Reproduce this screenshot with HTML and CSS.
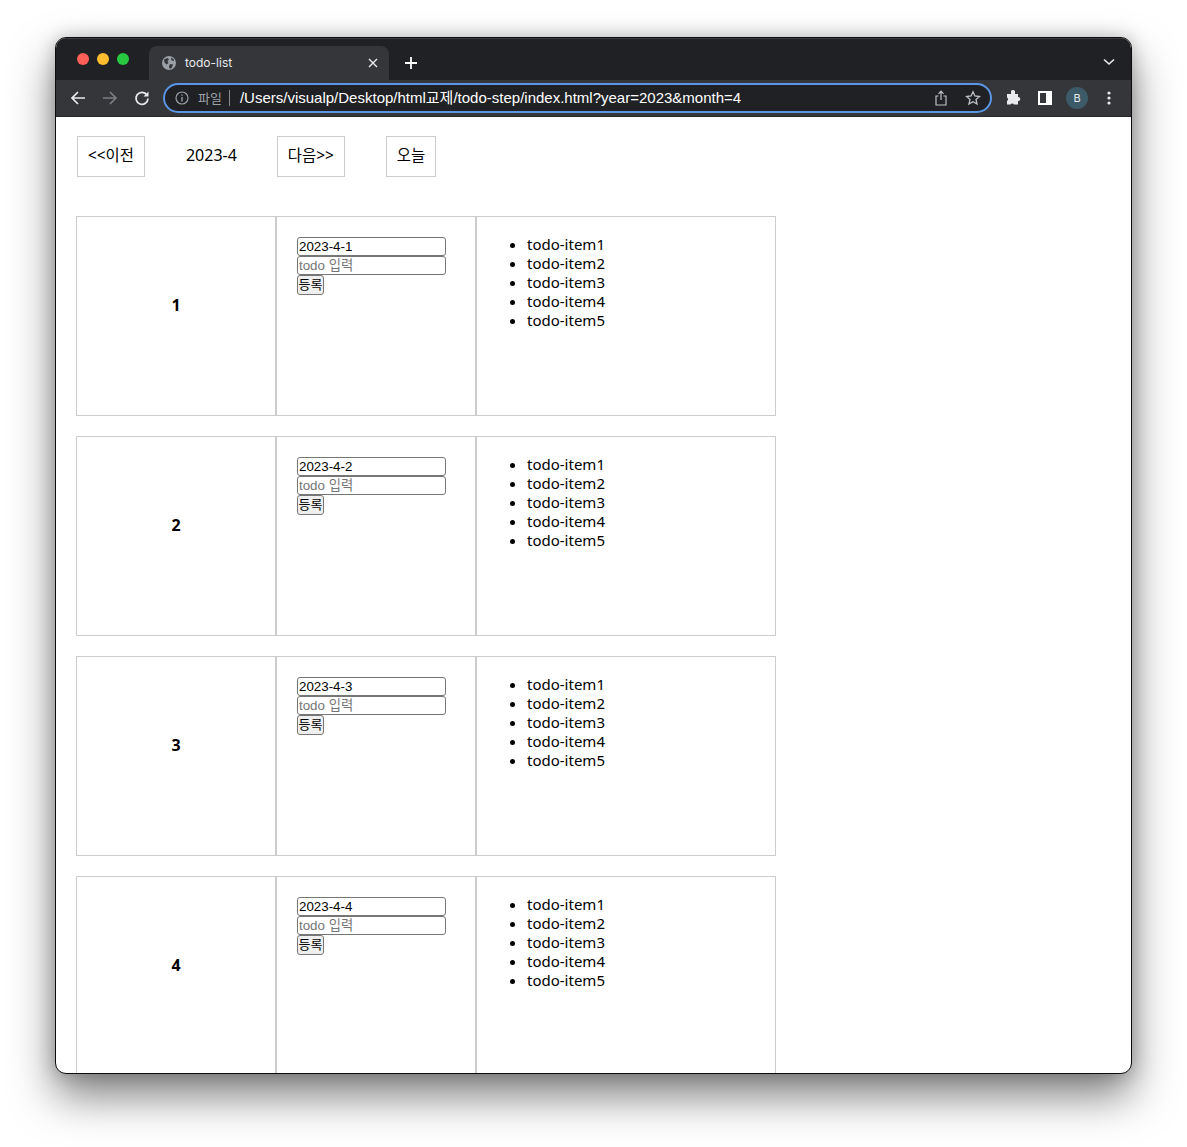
FILE: index.html
```html
<!DOCTYPE html>
<html lang="ko">
<head>
    <meta charset="UTF-8">
    <meta name="viewport" content="width=device-width, initial-scale=1.0">
    <title>todo-list</title>
    <link rel="stylesheet" href="styles.css">
</head>
<body>

<div class="window">
    <div class="tabstrip">
        <div class="lights">
            <span class="light red"></span>
            <span class="light yellow"></span>
            <span class="light green"></span>
        </div>
        <div class="tab">
            <svg class="globe" width="16" height="16" viewBox="0 0 16 16">
                <circle cx="8" cy="8" r="7" fill="#9aa0a6"/>
                <path d="M3 4.5 L6.5 3 L8 4.5 L6.5 6 L7.5 8 L5.5 9.5 L3.5 7.5 Z M9 9 L12 9.5 L11 12.5 L8.8 14 L8 11.5 Z M10 2.5 L12.5 4 L13 6 L10.5 5.5 Z" fill="#35363a"/>
            </svg>
            <span class="tab-title">todo-list</span>
            <svg class="tab-close" width="10" height="10" viewBox="0 0 10 10">
                <path d="M1 1 L9 9 M9 1 L1 9" stroke="#e8eaed" stroke-width="1.4"/>
            </svg>
        </div>
        <svg class="new-tab" width="12" height="12" viewBox="0 0 12 12">
            <path d="M6 0 V12 M0 6 H12" stroke="#fff" stroke-width="1.8"/>
        </svg>
        <svg class="tab-list" width="12" height="8" viewBox="0 0 12 8">
            <path d="M1 1.5 L6 6 L11 1.5" fill="none" stroke="#e8eaed" stroke-width="1.6"/>
        </svg>
    </div>

    <div class="toolbar">
        <svg class="nav-icon" width="16" height="16" viewBox="0 0 16 16">
            <path d="M15 8 H2 M8 2 L2 8 L8 14" fill="none" stroke="#e8eaed" stroke-width="1.7"/>
        </svg>
        <svg class="nav-icon" width="16" height="16" viewBox="0 0 16 16">
            <path d="M1 8 H14 M8 2 L14 8 L8 14" fill="none" stroke="#7c7e82" stroke-width="1.7"/>
        </svg>
        <svg class="nav-icon" width="16" height="16" viewBox="0 0 16 16">
            <path d="M13 5 A6 6 0 1 0 14 8.5" fill="none" stroke="#e8eaed" stroke-width="1.7"/>
            <path d="M14.5 1.5 V6.5 H9.5 Z" fill="#e8eaed"/>
        </svg>

        <div class="omnibox">
            <svg class="info" width="14" height="14" viewBox="0 0 14 14">
                <circle cx="7" cy="7" r="6" fill="none" stroke="#9aa0a6" stroke-width="1.2"/>
                <path d="M7 6 V10.5 M7 3.4 V4.8" stroke="#9aa0a6" stroke-width="1.4"/>
            </svg>
            <span class="scheme">파일</span>
            <span class="divider"></span>
            <span class="url">/Users/visualp/Desktop/html교제/todo-step/index.html?year=2023&amp;month=4</span>
            <svg class="share" width="14" height="16" viewBox="0 0 14 16">
                <path d="M4.5 6 H2 V15 H12 V6 H9.5 M7 10 V1.5 M4.5 3.8 L7 1.2 L9.5 3.8" fill="none" stroke="#bdc1c6" stroke-width="1.2"/>
            </svg>
            <svg class="star" width="16" height="16" viewBox="0 0 16 16">
                <path d="M8 1.8 L9.9 6 L14.5 6.5 L11 9.5 L12 14 L8 11.7 L4 14 L5 9.5 L1.5 6.5 L6.1 6 Z" fill="none" stroke="#bdc1c6" stroke-width="1.3"/>
            </svg>
        </div>

        <svg class="puzzle" width="16" height="16" viewBox="0 0 16 16">
            <path d="M6 1.5 A2 2 0 0 1 10 2.5 V4 H13 V7 A2 2 0 0 1 13.5 11 H13 V14.5 H9 A2 2 0 0 0 5.5 14.5 H2 V11 A2 2 0 0 0 2 7.5 V4 H6 Z" fill="#e8eaed"/>
        </svg>
        <svg class="side-panel" width="14" height="14" viewBox="0 0 14 14">
            <path d="M0 0 H14 V14 H0 Z M2 2 V12 H8 V2 Z" fill="#fff" fill-rule="evenodd"/>
        </svg>
        <span class="avatar">B</span>
        <svg class="menu" width="4" height="14" viewBox="0 0 4 14">
            <circle cx="2" cy="2" r="1.6" fill="#e8eaed"/>
            <circle cx="2" cy="7" r="1.6" fill="#e8eaed"/>
            <circle cx="2" cy="12" r="1.6" fill="#e8eaed"/>
        </svg>
    </div>

    <div class="page">
        <div class="calendar-nav">
            <a class="nav-btn">&lt;&lt;이전</a>
            <span class="current">2023-4</span>
            <a class="nav-btn">다음&gt;&gt;</a>
            <a class="nav-btn">오늘</a>
        </div>

        <div class="days">
            <div class="day">
                <div class="cell day-num">1</div>
                <form class="cell day-form">
                    <input type="text" value="2023-4-1">
                    <input type="text" placeholder="todo 입력">
                    <button type="button">등록</button>
                </form>
                <div class="cell day-list">
                    <ul>
                        <li>todo-item1</li>
                        <li>todo-item2</li>
                        <li>todo-item3</li>
                        <li>todo-item4</li>
                        <li>todo-item5</li>
                    </ul>
                </div>
            </div>
            <div class="day">
                <div class="cell day-num">2</div>
                <form class="cell day-form">
                    <input type="text" value="2023-4-2">
                    <input type="text" placeholder="todo 입력">
                    <button type="button">등록</button>
                </form>
                <div class="cell day-list">
                    <ul>
                        <li>todo-item1</li>
                        <li>todo-item2</li>
                        <li>todo-item3</li>
                        <li>todo-item4</li>
                        <li>todo-item5</li>
                    </ul>
                </div>
            </div>
            <div class="day">
                <div class="cell day-num">3</div>
                <form class="cell day-form">
                    <input type="text" value="2023-4-3">
                    <input type="text" placeholder="todo 입력">
                    <button type="button">등록</button>
                </form>
                <div class="cell day-list">
                    <ul>
                        <li>todo-item1</li>
                        <li>todo-item2</li>
                        <li>todo-item3</li>
                        <li>todo-item4</li>
                        <li>todo-item5</li>
                    </ul>
                </div>
            </div>
            <div class="day">
                <div class="cell day-num">4</div>
                <form class="cell day-form">
                    <input type="text" value="2023-4-4">
                    <input type="text" placeholder="todo 입력">
                    <button type="button">등록</button>
                </form>
                <div class="cell day-list">
                    <ul>
                        <li>todo-item1</li>
                        <li>todo-item2</li>
                        <li>todo-item3</li>
                        <li>todo-item4</li>
                        <li>todo-item5</li>
                    </ul>
                </div>
            </div>
        </div>
    </div>
</div>

</body>
</html>
```

FILE: styles.css
```css
html, body {
    height: 100%;
}
body {
    margin: 0;
    background-color: #fff;
    font-family: "Noto Sans", "Noto Sans CJK KR", sans-serif;
    overflow: hidden;
}
.window {
    box-sizing: border-box;
    width: 1077px;
    height: 1037px;
    margin: 37px 0 0 55px;
    border: 1px solid #0c0c0d;
    border-radius: 11px;
    overflow: hidden;
    background: #fff;
    display: flex;
    flex-direction: column;
    box-shadow: 0 22px 44px rgba(0, 0, 0, 0.5), 0 0 18px rgba(0, 0, 0, 0.22);
}

.tabstrip {
    height: 42px;
    flex-shrink: 0;
    background: #202124;
    display: flex;
    align-items: flex-end;
    box-shadow: inset 0 1px 0 #3c3d40;
}
.lights {
    width: 93px;
    height: 42px;
    display: flex;
    align-items: flex-start;
    gap: 8px;
    padding: 15px 0 0 21px;
    box-sizing: border-box;
}
.light {
    width: 12px;
    height: 12px;
    border-radius: 50%;
}
.red { background: #ff5f57; }
.yellow { background: #febc2e; }
.green { background: #28c840; }

.tab {
    width: 240px;
    height: 34px;
    box-sizing: border-box;
    background: #35363a;
    border-radius: 8px 8px 0 0;
    display: flex;
    align-items: center;
    padding: 0 11px 0 12px;
    color: #e8eaed;
}
.tab-title {
    margin-left: 8px;
    padding-bottom: 2px;
    font: 12px Inter, "Liberation Sans", sans-serif;
    flex: 1;
}
.new-tab {
    margin: 0 0 11px 16px;
}
.tab-list {
    margin: 0 16px 14px auto;
}

.toolbar {
    height: 37px;
    flex-shrink: 0;
    box-sizing: border-box;
    background: #35363a;
    border-bottom: 1px solid #26272a;
    display: flex;
    align-items: center;
    padding-bottom: 1px;
    padding-left: 14px;
}
.nav-icon {
    margin-right: 16px;
}
.omnibox {
    box-sizing: border-box;
    width: 829px;
    height: 30px;
    margin-left: -3px;
    background: #202124;
    border: 2px solid #5a95e6;
    border-radius: 15px;
    display: flex;
    align-items: center;
    padding: 0 10px;
}
.scheme {
    margin-left: 9px;
    font-size: 13px;
    color: #9aa0a6;
}
.divider {
    width: 1px;
    height: 16px;
    background: #8a8d91;
    margin: 0 10px 0 7px;
}
.url {
    flex: 1;
    color: #fff;
    font: 15px/16px "Liberation Sans", "Noto Sans CJK KR", sans-serif;
    white-space: nowrap;
}
.star {
    margin-left: 17px;
    margin-right: -1px;
}
.puzzle {
    margin-left: 13px;
}
.side-panel {
    margin-left: 17px;
}
.avatar {
    width: 22px;
    height: 22px;
    margin-left: 14px;
    border-radius: 50%;
    background: #3d5a68;
    color: #e8eaed;
    font: 11px/22px Inter, "Liberation Sans", sans-serif;
    text-align: center;
}
.menu {
    margin-left: 19px;
}

.page {
    flex: 1;
    padding: 19px 0 0 20px;
    color: #000;
    font-size: 15px;
    line-height: 19px;
    overflow: hidden;
}
.calendar-nav {
    display: flex;
    align-items: flex-start;
    height: 41px;
    margin-left: 1px;
}
.nav-btn {
    box-sizing: border-box;
    height: 41px;
    border: 1px solid #ccc;
    padding: 9px 10px;
    font-size: 15.4px;
    margin-right: 41px;
}
.current {
    padding-top: 10px;
    font-size: 16px;
    margin-right: 40px;
}
.days {
    margin-top: 39px;
    display: flex;
    flex-direction: column;
    gap: 20px;
}
.day {
    display: flex;
    flex-shrink: 0;
}
.cell {
    box-sizing: border-box;
    height: 200px;
    border: 1px solid #ccc;
}
.day-num {
    width: 200px;
    padding-top: 79px;
    text-align: center;
    font-size: 16px;
    font-weight: 700;
}
.day-form {
    width: 200px;
    padding: 20px;
}
.day-form input {
    display: block;
    box-sizing: border-box;
    width: 149px;
    height: 19px;
    padding: 0 1px;
    border: 1px solid #767676;
    border-radius: 3px;
    font: 13.33px "Liberation Sans", "Noto Sans CJK KR", sans-serif;
    color: #000;
}
.day-form input::placeholder {
    color: #757575;
}
.day-form button {
    display: block;
    box-sizing: border-box;
    width: 27px;
    height: 20px;
    padding: 0 0 2px;
    background: #efefef;
    border: 1px solid #767676;
    border-radius: 3px;
    font: 13px/16px "Noto Sans CJK KR", sans-serif;
    color: #000;
}
.day-list {
    width: 300px;
    padding: 18px 20px;
}
.day-list ul {
    margin: 0;
    padding-left: 30px;
}
```
